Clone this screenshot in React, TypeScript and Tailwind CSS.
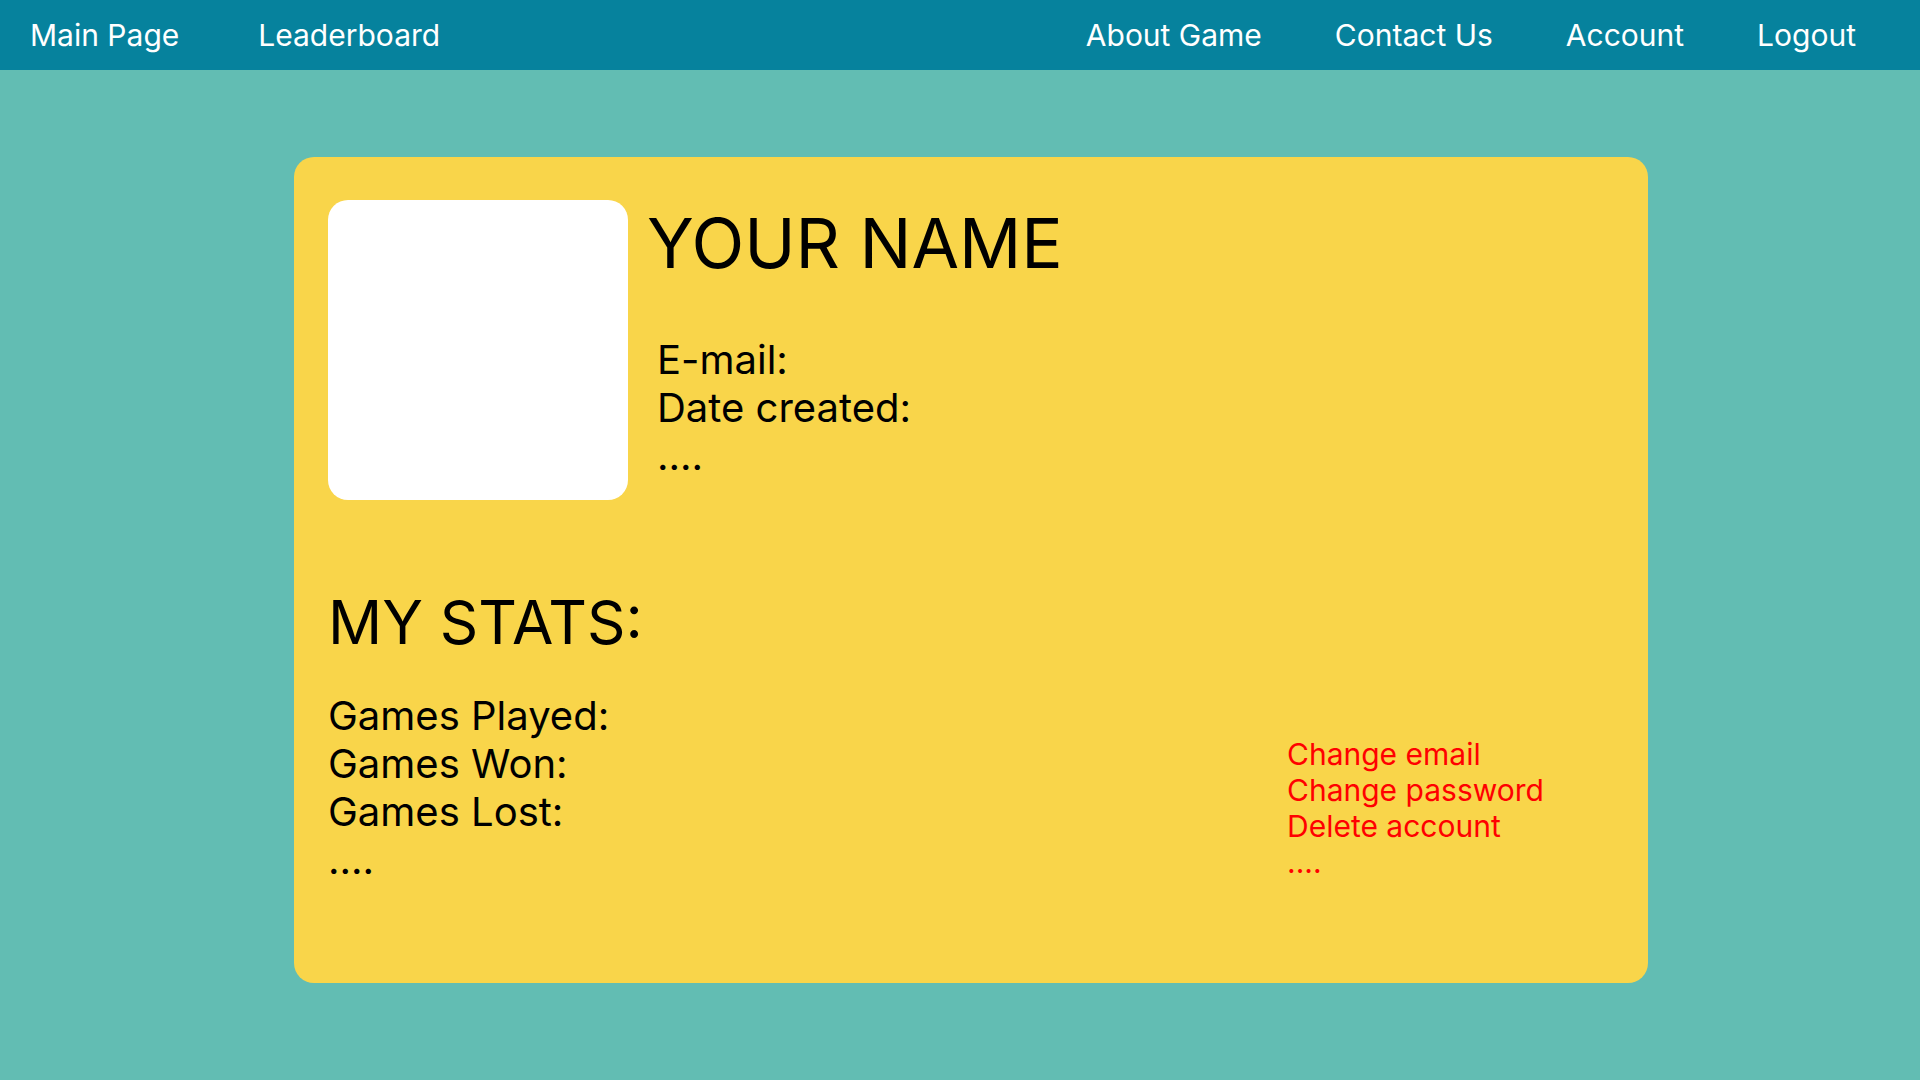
import React from "react";

const LEFT_LINKS = ["Main Page", "Leaderboard"] as const;
const RIGHT_LINKS = ["About Game", "Contact Us", "Account", "Logout"] as const;
const STATS = ["Games Played:", "Games Won:", "Games Lost:", "...."] as const;
const ACTIONS = ["Change email", "Change password", "Delete account", "...."] as const;

export default function App() {
  return (
    <div className="min-h-screen bg-[#62bdb3] font-['Inter',sans-serif] text-black">
      <header className="h-[70px] bg-[#06829d]">
        <nav className="flex h-full items-center justify-between text-[30px] leading-[36px] text-white" aria-label="Primary">
          <ul className="flex items-center gap-[79px] pl-[30px]">
            {LEFT_LINKS.map((l) => (
              <li key={l}>
                <a href="#">{l}</a>
              </li>
            ))}
          </ul>
          <ul className="flex items-center gap-[73px] pr-[64px]">
            {RIGHT_LINKS.map((l) => (
              <li key={l}>
                <a href="#">{l}</a>
              </li>
            ))}
          </ul>
        </nav>
      </header>

      <main className="pt-[87px]">
        <section className="ml-[294px] h-[826px] w-[1354px] rounded-[20px] bg-[#f9d54a] pl-[34px] pt-[43px]">
          {/* profile header */}
          <div className="flex">
            <div className="h-[300px] w-[300px] rounded-[20px] bg-white" />
            <div className="ml-[19px]">
              <h1 className="text-[69px] leading-[86px] font-normal">YOUR NAME</h1>
              <div className="mt-[50px] pl-[10px] text-[40px] leading-[48px]">
                <p>E-mail:</p>
                <p>Date created:</p>
                <p>....</p>
              </div>
            </div>
          </div>

          {/* stats + account actions */}
          <h2 className="mt-[86px] text-[60px] leading-[73px] font-normal">MY STATS:</h2>
          <div className="mt-[33px] grid grid-cols-[959px_1fr] items-end">
            <div className="text-[40px] leading-[48px]">
              {STATS.map((s, i) => (
                <p key={i}>{s}</p>
              ))}
            </div>
            <div className="mb-[4px] text-[30px] leading-[36px] text-[#ff0000]">
              {ACTIONS.map((a, i) => (
                <p key={i}>
                  <a href="#">{a}</a>
                </p>
              ))}
            </div>
          </div>
        </section>
      </main>
    </div>
  );
}
